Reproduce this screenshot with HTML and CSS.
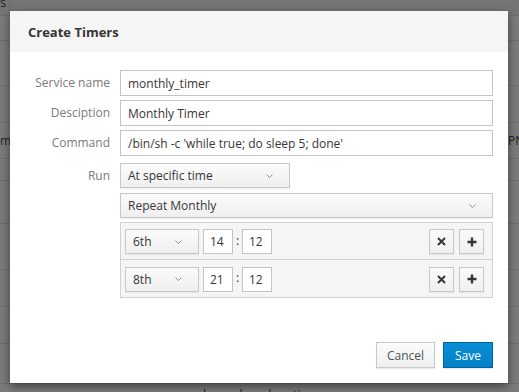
FILE: index.html
```html
<!DOCTYPE html>
<html lang="en">
<head>
    <meta charset="UTF-8">
    <title>Create Timers</title>
    <link rel="stylesheet" href="styles.css">
</head>
<body>

<!-- page behind the dialog -->
<div class="page">
    <div class="row head"><span class="cell first"><span>Timers</span></span></div>
    <div class="row r25"></div>
    <div class="row r45"></div>
    <div class="row r37"></div>
    <div class="row r36"><span class="cell left">monthly</span><span class="cell right">PM</span></div>
    <div class="row r22"></div>
    <div class="row r43"></div>
    <div class="row r46"></div>
    <div class="row r37"></div>
    <div class="row r37"></div>
    <div class="row r40"></div>
    <div class="row last"><span class="cell unit">unbound-anchor.timer</span></div>
</div>

<div class="modal">
    <div class="modal-header">
        <h4 class="modal-title">Create Timers</h4>
    </div>

    <div class="modal-body">
        <label class="control-label" for="serviceName">Service name</label>
        <input class="form-control" type="text" id="serviceName" value="monthly_timer">

        <label class="control-label" for="description">Desciption</label>
        <input class="form-control" type="text" id="description" value="Monthly Timer">

        <label class="control-label" for="command">Command</label>
        <input class="form-control" type="text" id="command" value="/bin/sh -c 'while true; do sleep 5; done'">

        <label class="control-label run-label">Run</label>
        <div class="run-field">
            <button class="select run-select">
                <span>At specific time</span>
                <svg class="caret" width="7" height="4" viewBox="0 0 7 4"><polyline points="0.5,0.5 3.5,3.5 6.5,0.5" fill="none" stroke="#8b8d8f" stroke-width="1"/></svg>
            </button>
        </div>

        <div class="repeat-field">
            <button class="select repeat-select">
                <span>Repeat Monthly</span>
                <svg class="caret" width="7" height="4" viewBox="0 0 7 4"><polyline points="0.5,0.5 3.5,3.5 6.5,0.5" fill="none" stroke="#8b8d8f" stroke-width="1"/></svg>
            </button>
        </div>

        <div class="timer-list">
            <div class="timer-row">
                <button class="select day-select">
                    <span>6th</span>
                    <svg class="caret" width="7" height="4" viewBox="0 0 7 4"><polyline points="0.5,0.5 3.5,3.5 6.5,0.5" fill="none" stroke="#8b8d8f" stroke-width="1"/></svg>
                </button>
                <input class="time-input" type="text" value="14">
                <span class="colon">:</span>
                <input class="time-input" type="text" value="12">
                <button class="icon-btn remove">
                    <svg width="9" height="9" viewBox="0 0 9 9"><path d="M1 1L8 8M8 1L1 8" stroke="#363636" stroke-width="2"/></svg>
                </button>
                <button class="icon-btn add">
                    <svg width="10" height="10" viewBox="0 0 10 10"><path d="M5 0.5V9.5M0.5 5H9.5" stroke="#363636" stroke-width="2.4"/></svg>
                </button>
            </div>
            <div class="timer-row">
                <button class="select day-select">
                    <span>8th</span>
                    <svg class="caret" width="7" height="4" viewBox="0 0 7 4"><polyline points="0.5,0.5 3.5,3.5 6.5,0.5" fill="none" stroke="#8b8d8f" stroke-width="1"/></svg>
                </button>
                <input class="time-input" type="text" value="21">
                <span class="colon">:</span>
                <input class="time-input" type="text" value="12">
                <button class="icon-btn remove">
                    <svg width="9" height="9" viewBox="0 0 9 9"><path d="M1 1L8 8M8 1L1 8" stroke="#363636" stroke-width="2"/></svg>
                </button>
                <button class="icon-btn add">
                    <svg width="10" height="10" viewBox="0 0 10 10"><path d="M5 0.5V9.5M0.5 5H9.5" stroke="#363636" stroke-width="2.4"/></svg>
                </button>
            </div>
        </div>
    </div>

    <div class="modal-footer">
        <button class="btn">Cancel</button>
        <button class="btn btn-primary">Save</button>
    </div>
</div>

</body>
</html>
```

FILE: styles.css
```css
body {
    margin: 0;
    width: 519px;
    height: 392px;
    overflow: hidden;
    position: relative;
    background-color: #7b7b7b;
    font-family: 'Open Sans', sans-serif;
    font-size: 12px;
    color: #363636;
}

/* page behind the overlay */
.page {
    display: flex;
    flex-direction: column;
}
.row {
    display: flex;
    border-bottom: 1px solid #6d6d6d;
    box-sizing: border-box;
    color: #1e1e1e;
}
.head {
    height: 16px;
    background-color: #757575;
    overflow: hidden;
}
.r25 { height: 25px; }
.r45 { height: 45px; }
.r37 { height: 37px; }
.r36 { height: 36px; align-items: center; }
.r22 { height: 22px; }
.r43 { height: 43px; }
.r46 { height: 46px; }
.r40 { height: 40px; }
.last {
    border-bottom: none;
    padding-top: 1px;
}
.cell {
    white-space: nowrap;
    overflow: hidden;
}
.first {
    width: 10px;
    display: flex;
    justify-content: flex-end;
    padding-right: 3px;
    box-sizing: border-box;
    border-right: 1px solid #6d6d6d;
    line-height: 12px;
    margin-top: -3px;
}
.left {
    width: 60px;
}
.right {
    margin-left: auto;
    width: 11px;
}
.unit {
    margin-left: 187px;
    font-size: 13px;
}

/* dialog */
.modal {
    position: absolute;
    left: 10px;
    top: 11px;
    width: 498px;
    background-color: #fff;
    box-shadow: 0 3px 9px rgba(0,0,0,0.5);
}
.modal-header {
    height: 41px;
    padding: 0 18px;
    display: flex;
    align-items: center;
    background-color: #f5f5f5;
}
.modal-title {
    margin: 0;
    font-size: 13px;
    font-weight: 700;
    color: #363636;
}
.modal-body {
    display: grid;
    grid-template-columns: 82px 1fr;
    column-gap: 10px;
    row-gap: 4px;
    padding: 18px 15px 0 18px;
}
.control-label {
    text-align: right;
    line-height: 26px;
    color: #7a7a7a;
}
.form-control {
    height: 26px;
    box-sizing: border-box;
    margin: 0;
    padding: 0 7px;
    border: 1px solid #c4c4c4;
    font-family: inherit;
    font-size: 12px;
    color: #363636;
}
.run-label {
    margin-top: 3px;
    line-height: 25px;
}
.run-field {
    margin-top: 3px;
}
.repeat-field {
    grid-column: 2;
    margin-top: 1px;
}

.select {
    display: flex;
    align-items: center;
    justify-content: space-between;
    height: 25px;
    box-sizing: border-box;
    margin: 0;
    padding: 0 16px 0 7px;
    border: 1px solid #c8c8c8;
    background: linear-gradient(#fbfbfb, #efefef);
    box-shadow: 0 1px 1px rgba(0,0,0,0.06);
    font-family: inherit;
    font-size: 12px;
    color: #363636;
}
.run-select {
    width: 170px;
}
.repeat-select {
    width: 100%;
}
.caret {
    display: block;
}

.timer-list {
    grid-column: 2;
    border: 1px solid #d1d1d1;
    background-color: #f5f5f5;
}
.timer-row {
    display: flex;
    align-items: center;
    height: 37px;
    box-sizing: border-box;
    padding: 1px 8px 0 4px;
    border-bottom: 1px solid #d1d1d1;
}
.timer-row:last-child {
    border-bottom: none;
    height: 37px;
}
.day-select {
    width: 74px;
    margin-right: 4px;
}
.time-input {
    width: 30px;
    height: 25px;
    box-sizing: border-box;
    margin: 0;
    padding: 0 0 0 6px;
    border: 1px solid #c4c4c4;
    background-color: #fff;
    font-family: inherit;
    font-size: 12px;
    color: #363636;
}
.colon {
    width: 9px;
    text-align: center;
    margin-top: -3px;
    color: #363636;
}
.icon-btn {
    width: 25px;
    height: 25px;
    margin: 0;
    padding: 0;
    display: flex;
    align-items: center;
    justify-content: center;
    border: 1px solid #c8c8c8;
    background: linear-gradient(#fbfbfb, #efefef);
    box-shadow: 0 1px 1px rgba(0,0,0,0.06);
}
.remove {
    margin-left: auto;
}
.add {
    margin-left: 5px;
}

.modal-footer {
    display: flex;
    justify-content: flex-end;
    gap: 8px;
    padding: 44px 15px 15px;
}
.btn {
    height: 26px;
    margin: 0;
    padding: 0 10px;
    border: 1px solid #c8c8c8;
    background: linear-gradient(#fbfbfb, #efefef);
    box-shadow: 0 1px 1px rgba(0,0,0,0.08);
    font-family: inherit;
    font-size: 12px;
    color: #4d5258;
}
.btn-primary {
    padding: 0 11px;
    border-color: #00659c;
    background: linear-gradient(#0a8fd6, #0280c6);
    color: #fff;
}
```
